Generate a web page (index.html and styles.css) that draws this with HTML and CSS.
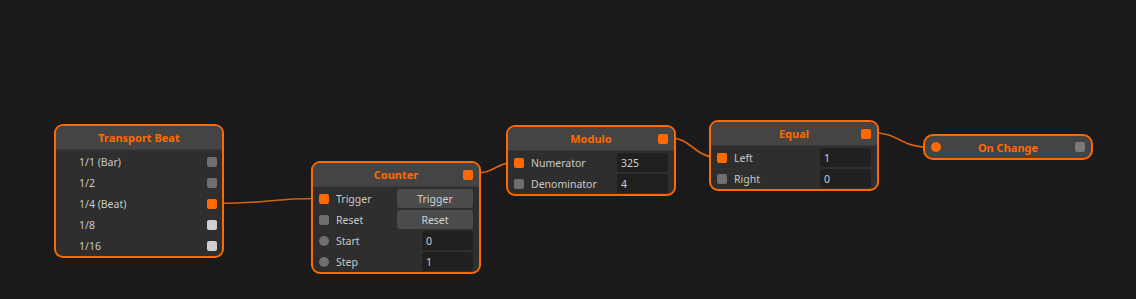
FILE: index.html
```html
<!DOCTYPE html>
<html lang="en">
<head>
  <meta charset="UTF-8" />
  <title>Node Editor</title>
  <link rel="stylesheet" href="styles.css">
</head>
<body>
  <div class="editor">
    <svg class="connections" width="1136" height="299">
      <path d="M216 203.5 C 268 203.5, 268 198.5, 319 198.5" />
      <path d="M473 173.5 C 495 173.5, 495 162.5, 516 162.5" />
      <path d="M667 137.5 C 693 137.5, 693 157.5, 719 157.5" />
      <path d="M870 132.5 C 900 132.5, 900 147.5, 931 147.5" />
    </svg>

    <div class="node" style="left: 54px; top: 124px;">
      <div class="node-header">Transport Beat</div>
      <div class="node-body">
        <div class="row out"><span class="label">1/1 (Bar)</span><span class="port sq dim"></span></div>
        <div class="row out"><span class="label">1/2</span><span class="port sq dim"></span></div>
        <div class="row out"><span class="label">1/4 (Beat)</span><span class="port sq on"></span></div>
        <div class="row out"><span class="label">1/8</span><span class="port sq light"></span></div>
        <div class="row out"><span class="label">1/16</span><span class="port sq light"></span></div>
      </div>
    </div>

    <div class="node" style="left: 311px; top: 161px;">
      <div class="node-header">Counter<span class="port sq on head-port"></span></div>
      <div class="node-body">
        <div class="row"><span class="port sq on"></span><span class="label">Trigger</span><button class="btn">Trigger</button></div>
        <div class="row"><span class="port sq dim"></span><span class="label">Reset</span><button class="btn">Reset</button></div>
        <div class="row"><span class="port round dim"></span><span class="label">Start</span><span class="field">0</span></div>
        <div class="row"><span class="port round dim"></span><span class="label">Step</span><span class="field">1</span></div>
      </div>
    </div>

    <div class="node" style="left: 506px; top: 125px;">
      <div class="node-header">Modulo<span class="port sq on head-port"></span></div>
      <div class="node-body">
        <div class="row"><span class="port sq on"></span><span class="label">Numerator</span><span class="field">325</span></div>
        <div class="row"><span class="port sq dim"></span><span class="label">Denominator</span><span class="field">4</span></div>
      </div>
    </div>

    <div class="node" style="left: 709px; top: 120px;">
      <div class="node-header">Equal<span class="port sq on head-port"></span></div>
      <div class="node-body">
        <div class="row"><span class="port sq on"></span><span class="label">Left</span><span class="field">1</span></div>
        <div class="row"><span class="port sq dim"></span><span class="label">Right</span><span class="field">0</span></div>
      </div>
    </div>

    <div class="node compact" style="left: 923px; top: 134px;">
      <span class="port round on"></span>
      <span class="compact-title">On Change</span>
      <span class="port sq grey"></span>
    </div>
  </div>
</body>
</html>
```

FILE: styles.css
```css
* {
  box-sizing: border-box;
}

body {
  margin: 0;
  background: #1a1a1a;
  font-family: 'Noto Sans', 'Open Sans', sans-serif;
  color: #c9c9c9;
  overflow: hidden;
}

.editor {
  position: relative;
  width: 1136px;
  height: 299px;
}

.connections {
  position: absolute;
  left: 0;
  top: 0;
}

.connections path {
  fill: none;
  stroke: #d8600f;
  stroke-width: 1.7;
}

.node {
  position: absolute;
  width: 170px;
  background: #2e2e2e;
  border: 2px solid #ff6a00;
  border-radius: 9px;
  overflow: hidden;
}

.node-header {
  position: relative;
  height: 24px;
  background: #444;
  color: #ff6a00;
  font-size: 11px;
  font-weight: 700;
  display: flex;
  align-items: center;
  justify-content: center;
  border-bottom: 1px solid #3a3a3a;
}

.head-port {
  position: absolute;
  right: 6px;
  top: 7px;
}

.node-body {
  padding: 1px 0 0;
}

.row {
  height: 21px;
  display: flex;
  align-items: center;
  padding: 0 6px;
  font-size: 10.5px;
}

.row .label {
  flex: 1;
  margin-left: 7px;
}

.row.out {
  padding: 0 5px 0 23px;
}

.row.out .label {
  margin-left: 0;
}

.port {
  width: 10px;
  height: 10px;
  flex: none;
}

.port.sq {
  border-radius: 2px;
}

.port.round {
  border-radius: 50%;
}

.port.on {
  background: #ff6a00;
}

.port.dim {
  background: #6f6f6f;
}

.port.light {
  background: #cfcfcf;
}

.port.grey {
  background: #7a7a7a;
}

.btn {
  width: 76px;
  height: 19px;
  border: none;
  border-radius: 3px;
  background: #4b4b4b;
  color: #d0d0d0;
  font-family: inherit;
  font-size: 10.5px;
  padding: 0;
}

.field {
  width: 51px;
  height: 19px;
  background: #202020;
  border-radius: 3px;
  padding: 0 4px;
  display: flex;
  align-items: center;
  color: #cfcfcf;
}

.node.compact {
  height: 26px;
  background: #444;
  border-radius: 10px;
  display: flex;
  align-items: center;
  padding: 0 6px;
}

.compact-title {
  flex: 1;
  text-align: center;
  color: #ff6a00;
  font-size: 11px;
  font-weight: 700;
}
```
